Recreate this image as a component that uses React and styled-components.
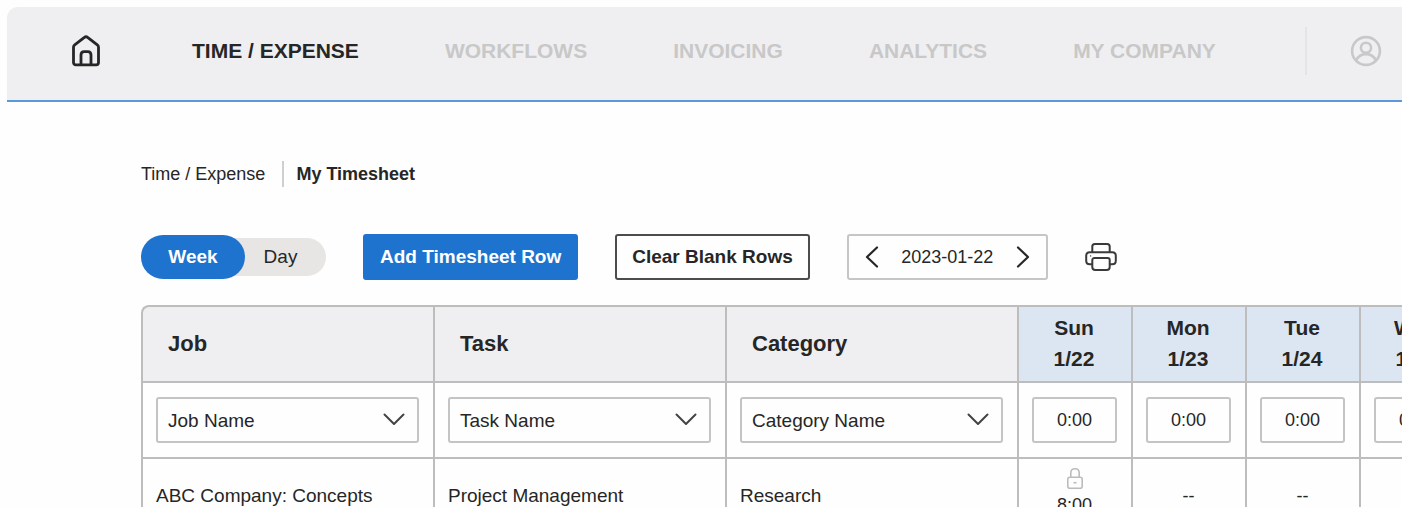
import React, { useState } from "react";
import styled, { createGlobalStyle, css } from "styled-components";

const GlobalStyle = createGlobalStyle`
  * {
    box-sizing: border-box;
  }
  body {
    margin: 0;
    background: #fefefe;
    color: #262626;
    font-family: "Liberation Sans", Arial, sans-serif;
    font-size: 18px;
  }
  button, input, select {
    margin: 0;
    color: inherit;
    font: inherit;
  }
`;

const Page = styled.div`
  height: 100vh;
  overflow: hidden;
  padding: 7px 0 0 7px;
`;

const Header = styled.header`
  display: flex;
  align-items: center;
  height: 95px;
  padding: 0 20px 6px 64px;
  background: #efeff1;
  border-bottom: 2px solid #5b99dd;
  border-top-left-radius: 11px;
`;

const IconLink = styled.a`
  display: flex;
  flex: none;
  color: ${(props) => (props.$muted ? "#c8c8c8" : "#262626")};
`;

const Nav = styled.nav`
  display: flex;
  gap: 86px;
  margin-left: 91px;
`;

const NavLink = styled.a`
  color: ${(props) => (props.$active ? "#262626" : "#c8c8c8")};
  font-size: 21px;
  font-weight: bold;
  line-height: 24px;
  text-decoration: none;
  white-space: nowrap;
`;

const Divider = styled.span`
  flex: none;
  width: 2px;
  height: 48px;
  margin: 0 43px 0 auto;
  background: #e4e4e6;
`;

const Main = styled.main`
  padding: 59px 0 0 134px;
`;

const Breadcrumb = styled.nav`
  display: flex;
  align-items: center;
  height: 26px;
  white-space: nowrap;

  a {
    padding-right: 17px;
    border-right: 2px solid #cfcfcf;
    color: inherit;
    line-height: 26px;
    text-decoration: none;
  }
  strong {
    padding-left: 12px;
  }
`;

const Toolbar = styled.div`
  display: flex;
  align-items: center;
  gap: 37px;
  margin: 47px 0 25px;
`;

const Toggle = styled.div`
  display: flex;
  align-items: center;
  width: 185px;
  height: 38px;
  background: #e7e6e5;
  border-radius: 19px;
`;

const ToggleButton = styled.button`
  height: 38px;
  padding: 0;
  border: 0;
  background: none;
  flex: 1;
  font-size: 19px;

  ${(props) =>
    props.$active &&
    css`
      flex: none;
      width: 104px;
      height: 44px;
      border-radius: 22px;
      background: #1e73ce;
      color: #fff;
      font-weight: bold;
    `}
`;

const DayLabel = styled.span`
  padding-right: 10px;
`;

const Button = styled.button`
  height: 46px;
  padding: 0 15px;
  border: 2px solid ${(props) => (props.$primary ? "#1e73ce" : "#4c4c4c")};
  border-radius: 3px;
  background: ${(props) => (props.$primary ? "#1e73ce" : "#fefefe")};
  color: ${(props) => (props.$primary ? "#fff" : "#262626")};
  font-size: 19px;
  font-weight: bold;
  white-space: nowrap;
`;

const DatePicker = styled.div`
  display: flex;
  align-items: center;
  justify-content: space-between;
  width: 201px;
  height: 46px;
  padding: 0 16px;
  border: 2px solid #c6c6c6;
  border-radius: 3px;
`;

const IconButton = styled.button`
  display: flex;
  padding: 0;
  border: 0;
  background: none;
`;

const TableWrap = styled.div`
  overflow: hidden;
`;

const Table = styled.table`
  width: 1676px;
  table-layout: fixed;
  border-spacing: 0;
  border-right: 2px solid #bdbdbd;
`;

const Col = styled.col`
  width: ${(props) => (props.$day ? "114px" : "292px")};
`;

const Th = styled.th`
  height: 76px;
  padding: 0 0 0 25px;
  border-top: 2px solid #bdbdbd;
  border-left: 2px solid #bdbdbd;
  background: #efeff1;
  font-size: 22px;
  text-align: left;

  &:first-child {
    border-top-left-radius: 8px;
  }
  ${(props) =>
    props.$day &&
    css`
      padding: 0 2px 2px 0;
      background: #dce6f2;
      font-size: 21px;
      line-height: 31px;
      text-align: center;
    `}
`;

const Td = styled.td`
  height: 76px;
  padding: 0 14px 0 13px;
  border-top: 2px solid #bdbdbd;
  border-left: 2px solid #bdbdbd;
  font-size: ${(props) => (props.$day ? "18px" : "19px")};
  text-align: ${(props) => (props.$day ? "center" : "left")};
`;

const SelectBox = styled.div`
  position: relative;

  svg {
    position: absolute;
    top: 16px;
    right: 14px;
    pointer-events: none;
  }
`;

const Select = styled.select`
  display: block;
  width: 100%;
  height: 46px;
  padding: 0 40px 0 10px;
  border: 2px solid #c4c4c4;
  border-radius: 3px;
  background: #fefefe;
  appearance: none;
`;

const HoursInput = styled.input`
  display: block;
  width: 100%;
  height: 46px;
  padding: 0;
  border: 2px solid #c4c4c4;
  border-radius: 3px;
  background: #fefefe;
  text-align: center;
`;

const Locked = styled.div`
  display: flex;
  flex-direction: column;
  align-items: center;
  gap: 5px;
  padding-bottom: 9px;
  line-height: 22px;
`;

const HomeIcon = () => (
  <svg width="30" height="32" viewBox="0 0 30 32" fill="none" stroke="currentColor" strokeWidth="2.8" strokeLinejoin="round">
    <path d="M2.500 12.200c0-1 .4-1.800 1.200-2.400L13.400 2.400c1-.8 2.200-.8 3.200 0l9.700 7.400c.8.6 1.200 1.400 1.200 2.400v15.300c0 1.400-1 2.300-2.300 2.300H4.800c-1.300 0-2.300-.9-2.300-2.300z" />
    <path d="M10 29.500V20c0-2 1.300-3.300 3.200-3.300h3.600c1.900 0 3.200 1.300 3.200 3.300v9.500" />
  </svg>
);

const UserIcon = () => (
  <svg width="32" height="32" viewBox="0 0 32 32" fill="none" stroke="currentColor" strokeWidth="2.6">
    <circle cx="16" cy="16" r="13.9" />
    <circle cx="16" cy="12.8" r="5.1" />
    <path d="M6.200 25.400c1.800-4 5.400-6.300 9.800-6.300s8 2.300 9.800 6.300" />
  </svg>
);

const ChevronIcon = ({ left }) => (
  <svg width="14" height="22" viewBox="0 0 14 22" fill="none" stroke="currentColor" strokeWidth="2.2" strokeLinecap="round" strokeLinejoin="round">
    <path d={left ? "M12 1.5 2 11l10 9.5" : "M2 1.5 12 11 2 20.5"} />
  </svg>
);

const ArrowDown = () => (
  <svg width="22" height="13" viewBox="0 0 22 13" fill="none" stroke="#444" strokeWidth="2" strokeLinecap="round" strokeLinejoin="round">
    <path d="M1.5 1.5 11 11l9.500-9.500" />
  </svg>
);

const PrinterIcon = () => (
  <svg width="32" height="28" viewBox="0 0 32 28" fill="none" stroke="#3a3a3a" strokeWidth="2" strokeLinejoin="round">
    <path d="M7.300 9V3.600C7.300 2 8.200 1.100 9.800 1.100h12.400c1.600 0 2.500.9 2.500 2.500V9" />
    <path d="M7.300 21.200H4.700c-2.200 0-3.500-1.300-3.500-3.500v-5c0-2.200 1.300-3.500 3.500-3.500h22.600c2.200 0 3.500 1.300 3.500 3.500v5c0 2.200-1.300 3.500-3.500 3.500h-2.600" />
    <path d="M9.300 15.100h13.400c1.200 0 2 .8 2 2v6.800c0 1.900-1.100 3-3 3H10.300c-1.900 0-3-1.100-3-3v-6.800c0-1.200.8-2 2-2z" />
    <circle cx="5.600" cy="12.900" r=".7" fill="#3a3a3a" stroke="none" />
  </svg>
);

const LockIcon = () => (
  <svg width="16" height="21" viewBox="0 0 16 21" fill="none" stroke="#bcbcbc" strokeWidth="1.6">
    <path d="M3.800 9.200V5c0-2.500 1.700-4.200 4.200-4.200s4.200 1.700 4.200 4.200v4.200" />
    <rect x=".8" y="9.200" width="14.400" height="11" rx="2" />
    <path d="M6.500 14.700h3" />
  </svg>
);

const navItems = ["TIME / EXPENSE", "WORKFLOWS", "INVOICING", "ANALYTICS", "MY COMPANY"];
const columns = ["Job", "Task", "Category"];
const days = [
  { name: "Sun", date: "1/22" },
  { name: "Mon", date: "1/23" },
  { name: "Tue", date: "1/24" },
  { name: "Wed", date: "1/25" },
  { name: "Thu", date: "1/26" },
  { name: "Fri", date: "1/27" },
  { name: "Sat", date: "1/28" },
];
const entry = {
  details: ["ABC Company: Concepts", "Project Management", "Research"],
  hours: ["8:00", "--", "--", "--", "--", "--", "--"],
};

export default function App() {
  const [view, setView] = useState("Week");

  return (
    <Page>
      <GlobalStyle />
      <Header>
        <IconLink href="#home" aria-label="Home">
          <HomeIcon />
        </IconLink>
        <Nav>
          {navItems.map((item, index) => (
            <NavLink key={item} href="#" $active={index === 0}>
              {item}
            </NavLink>
          ))}
        </Nav>
        <Divider />
        <IconLink href="#account" aria-label="Account" $muted>
          <UserIcon />
        </IconLink>
      </Header>
      <Main>
        <Breadcrumb>
          <a href="#time">Time / Expense</a>
          <strong>My Timesheet</strong>
        </Breadcrumb>
        <Toolbar>
          <Toggle>
            <ToggleButton
              type="button"
              $active={view === "Week"}
              onClick={() => setView("Week")}
            >
              Week
            </ToggleButton>
            <ToggleButton
              type="button"
              $active={view === "Day"}
              onClick={() => setView("Day")}
            >
              <DayLabel>Day</DayLabel>
            </ToggleButton>
          </Toggle>
          <Button type="button" $primary>
            Add Timesheet Row
          </Button>
          <Button type="button">Clear Blank Rows</Button>
          <DatePicker>
            <IconButton type="button" aria-label="Previous week">
              <ChevronIcon left />
            </IconButton>
            <span>2023-01-22</span>
            <IconButton type="button" aria-label="Next week">
              <ChevronIcon />
            </IconButton>
          </DatePicker>
          <IconButton type="button" aria-label="Print">
            <PrinterIcon />
          </IconButton>
        </Toolbar>
        <TableWrap>
          <Table>
            <colgroup>
              {columns.map((column) => (
                <Col key={column} />
              ))}
              {days.map((day) => (
                <Col key={day.name} $day />
              ))}
            </colgroup>
            <thead>
              <tr>
                {columns.map((column) => (
                  <Th key={column}>{column}</Th>
                ))}
                {days.map((day) => (
                  <Th key={day.name} $day>
                    {day.name}
                    <br />
                    {day.date}
                  </Th>
                ))}
              </tr>
            </thead>
            <tbody>
              <tr>
                {columns.map((column) => (
                  <Td key={column}>
                    <SelectBox>
                      <Select aria-label={column}>
                        <option>{column} Name</option>
                      </Select>
                      <ArrowDown />
                    </SelectBox>
                  </Td>
                ))}
                {days.map((day) => (
                  <Td key={day.name} $day>
                    <HoursInput
                      type="text"
                      aria-label={`${day.name} hours`}
                      defaultValue="0:00"
                    />
                  </Td>
                ))}
              </tr>
              <tr>
                {entry.details.map((detail) => (
                  <Td key={detail}>{detail}</Td>
                ))}
                {entry.hours.map((value, index) => (
                  <Td key={days[index].name} $day>
                    {value === "--" ? (
                      value
                    ) : (
                      <Locked>
                        <LockIcon />
                        {value}
                      </Locked>
                    )}
                  </Td>
                ))}
              </tr>
            </tbody>
          </Table>
        </TableWrap>
      </Main>
    </Page>
  );
}
